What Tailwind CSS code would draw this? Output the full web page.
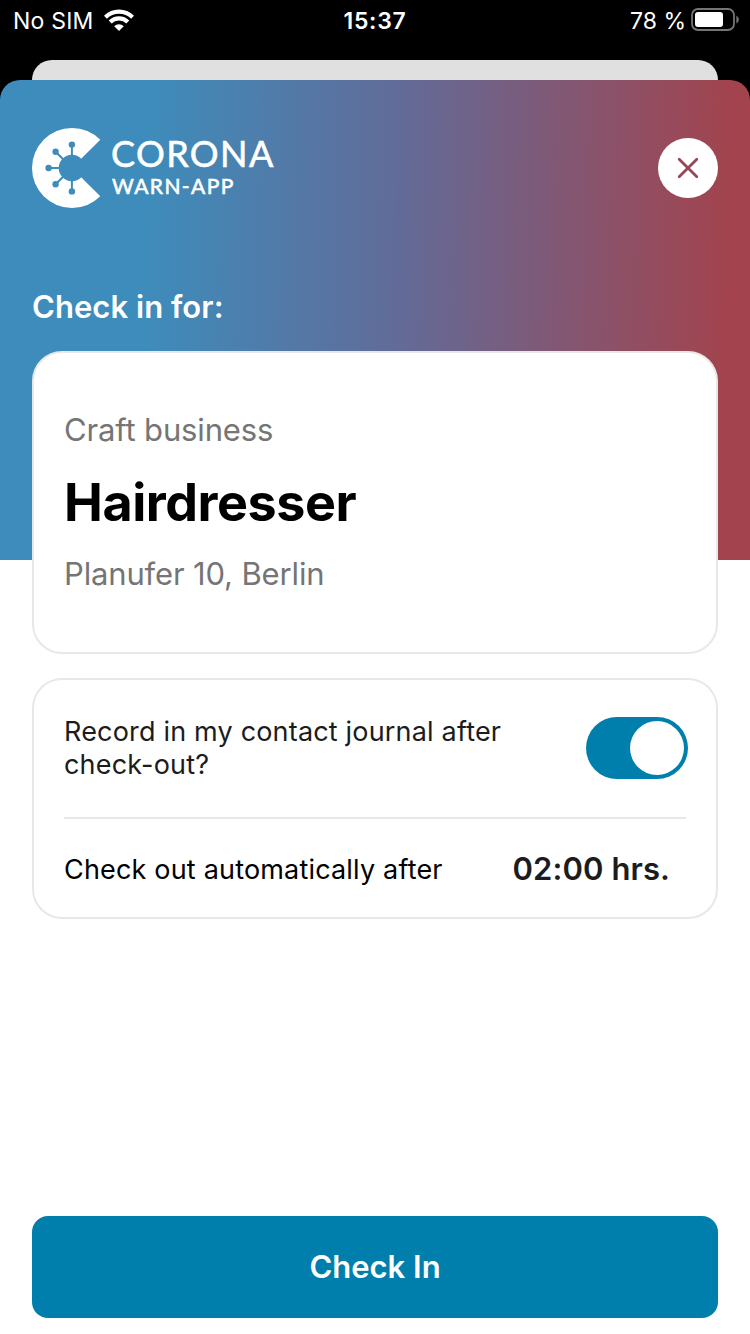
<!DOCTYPE html>
<html lang="en">
<head>
<meta charset="utf-8">
<title>Check in</title>
<script src="https://cdn.jsdelivr.net/npm/@tailwindcss/browser@4"></script>
</head>
<body class="w-[750px] h-[1334px] overflow-hidden bg-black flex flex-col font-['Inter','Liberation_Sans',sans-serif]">
  <div class="h-[60px] shrink-0 grid grid-cols-3 text-white text-[23px] leading-[41px]">
    <div class="flex h-[41px] items-center pl-[13px]">
      <span class="tracking-[0.2px] w-[91px] whitespace-nowrap pt-0.5">No SIM</span>
      <svg width="30" height="23" viewBox="0 0 30 23" fill="none" stroke="#fff">
        <path d="M1.4 8.2A19.2 19.2 0 0 1 28.6 8.2" stroke-width="4.2"/>
        <path d="M6.2 13A12.4 12.4 0 0 1 23.8 13" stroke-width="4.2"/>
        <path d="M10.2 17.2A6.8 6.8 0 0 1 19.8 17.2L15 22Z" fill="#fff" stroke="none"/>
      </svg>
    </div>
    <div class="text-center font-semibold tracking-[0.7px] h-[41px] pt-px">15:37</div>
    <div class="flex h-[41px] items-center justify-end pr-[11px] gap-[5px]">
      <span class="whitespace-nowrap pt-0.5">78 %</span>
      <svg class="mb-[2px]" width="48" height="23" viewBox="0 0 48 23">
        <rect x="1" y="1" width="42" height="21" rx="6" fill="none" stroke="#757575" stroke-width="1.8"/>
        <rect x="4" y="4" width="28" height="15" rx="3" fill="#fff"/>
        <path d="M45.4 7.5a4.5 4.5 0 0 1 0 8Z" fill="#757575"/>
      </svg>
    </div>
  </div>
  <div class="h-5 shrink-0 mx-8 rounded-t-[20px] bg-[#e0e0e0]"></div>
  <main class="flex-1 flex flex-col px-8 pb-4 rounded-t-[20px] bg-white bg-[linear-gradient(91deg,#3e8cbb_20%,#626b98_53%,#a3434d_97%)] bg-[length:100%_480px] bg-no-repeat">
    <header class="mt-12 h-20 shrink-0 flex items-center justify-between">
      <div class="flex h-20">
        <svg width="70" height="80" viewBox="0 0 70 80">
          <mask id="virus">
            <rect width="70" height="80" fill="#fff"/>
            <circle cx="39.9" cy="40" r="13.2" fill="#000"/>
            <path d="M39.9 40 72 8V72Z" fill="#000"/>
            <path d="M39.9 40V17M39.9 40V63M39.9 40H17M39.9 40 23.6 23.7M39.9 40 23.6 56.3" stroke="#000" stroke-width="2"/>
            <circle cx="39.9" cy="16.6" r="3.2"/><circle cx="39.9" cy="63.4" r="3.2"/><circle cx="16.6" cy="40" r="3.2"/><circle cx="23.6" cy="23.7" r="3.2"/><circle cx="23.6" cy="56.3" r="3.2"/>
          </mask>
          <circle cx="40" cy="40" r="40" fill="#fff" mask="url(#virus)"/>
        </svg>
        <div class="pl-[9px] pt-[9px] text-white font-['Lato',sans-serif] whitespace-nowrap [-webkit-text-stroke:0.6px_white]">
          <div class="h-8 leading-8 text-[36px] tracking-[1.4px]">CORONA</div>
          <div class="mt-[6px] h-[22px] leading-[22px] pl-px text-[21px] tracking-[1.4px]">WARN-APP</div>
        </div>
      </div>
      <button aria-label="Close" class="size-[60px] rounded-full bg-white flex items-center justify-center">
        <svg width="22" height="22" viewBox="0 0 22 22" stroke="#98475a" stroke-width="2.8" stroke-linecap="round"><path d="M2.2 2.2 19.8 19.8M19.8 2.2 2.2 19.8"/></svg>
      </button>
    </header>
    <h1 class="mt-[79px] h-10 leading-10 text-[31px] font-semibold text-white tracking-[0.05px] whitespace-nowrap">Check in for:</h1>
    <section class="mt-6 h-[303px] shrink-0 rounded-[30px] border-2 border-[#e8e8e8] bg-white px-[30px] pt-[57px] text-[#757575] text-[31px] leading-10 tracking-[-0.15px] whitespace-nowrap">
      <p>Craft business</p>
      <h2 class="mt-[23px] h-[60px] leading-[60px] text-[52px] font-bold text-black tracking-[-0.45px]">Hairdresser</h2>
      <p class="mt-[21px]">Planufer 10, Berlin</p>
    </section>
    <section class="mt-6 h-[241px] shrink-0 rounded-[30px] border-2 border-[#e8e8e8] bg-white px-[30px] text-[27px] tracking-[0.18px] flex flex-col whitespace-nowrap">
      <div class="h-[137px] pb-px w-[624px] flex justify-between items-center shrink-0 text-[#1b1c1e]">
        <p class="leading-[33px]">Record in my contact journal after<br>check-out?</p>
        <span class="w-[102px] h-[62px] rounded-full bg-[#007fad] flex items-center justify-end pr-1 shrink-0"><span class="size-[54px] rounded-full bg-white"></span></span>
      </div>
      <div class="h-0.5 shrink-0 bg-[#e8e8e8]"></div>
      <div class="flex-1 flex items-center justify-between pr-4 pt-[3px]">
        <p class="text-black pt-0.5">Check out automatically after</p>
        <p class="text-[31px] tracking-[0.1px] font-semibold text-[#1b1c1e]">02:00 hrs.</p>
      </div>
    </section>
    <button class="mt-auto h-[102px] rounded-2xl bg-[#007fad] text-white text-[31px] font-semibold">Check In</button>
  </main>
</body>
</html>
